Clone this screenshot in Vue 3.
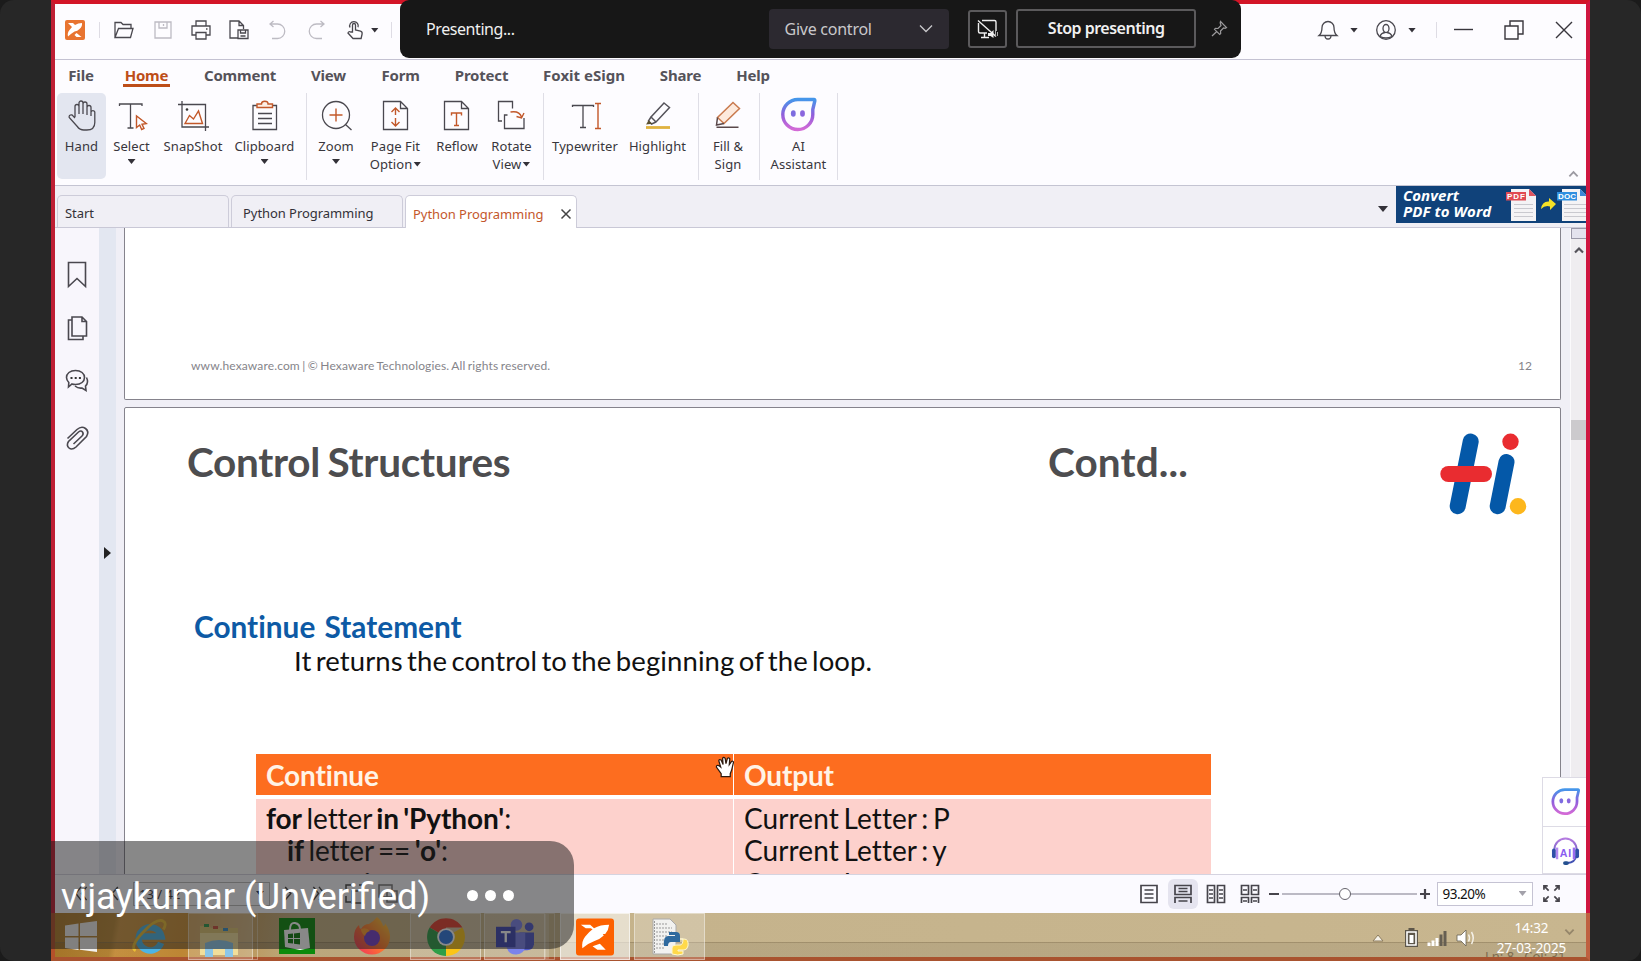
<script setup>
const K = 'fill="none" stroke="#4a484f" stroke-width="1.3"'
const G = 'fill="none" stroke="#bdbbc3" stroke-width="1.3"'
const O = 'fill="none" stroke="#c2582a" stroke-width="1.4"'

const quick = [
  `<path ${K} d="M1 17.500V2.500h6l2 2h8v4M1 17.500l3.500-9H19l-2.500 9z"/>`,
  `<path ${G} d="M2 2h16v16H2zM6 2v6h8V2M10.500 4v2"/>`,
  `<path ${K} d="M5 6V1h10v5M5 15H1V6h18v9h-4M5 12.500h10V19H5zM15 9h1.500"/>`,
  `<path ${K} d="M9 18H1V1h9l4.500 4.500V9M10 1v4.500h4.500M9 10h10v8.500H9zM11.500 10v3h5v-3M11.500 16h5"/>`,
  `<path ${G} d="M5.500 1L2 4l3.500 3M2 4h7.500a7 7 0 0 1 0 14.500H4"/>`,
  `<path ${G} d="M14.500 1L18 4l-3.500 3M18 4h-7.500a7 7 0 0 0 0 14.500H16"/>`,
  `<path ${K} d="M7.500 12V5a1.500 1.500 0 0 1 3 0v5l5 1.200q2 .6 1.600 2.800l-1 4.500H8L3 13q.8-2 2.600-1zM5 7.500a4.300 4.300 0 1 1 8-.2"/>`,
]

const menu = [
  { t: 'File', k: 'm-file' }, { t: 'Home', k: 'm-home' }, { t: 'Comment', k: 'm-comment' },
  { t: 'View', k: 'm-view' }, { t: 'Form', k: 'm-form' }, { t: 'Protect', k: 'm-protect' },
  { t: 'Foxit eSign', k: 'm-esign' }, { t: 'Share', k: 'm-share' }, { t: 'Help', k: 'm-help' },
]

const page = `<path ${K} d="M3.500 2.500h17l7 7v21h-24zM20.500 2.500v7h7"/>`
const ghost = (id) => `<defs><linearGradient id="${id}" x1="0" y1="0" x2="0" y2="1"><stop offset="0" stop-color="#4596ea"/><stop offset=".5" stop-color="#8f5fdc"/><stop offset="1" stop-color="#d36ad6"/></linearGradient></defs>
<path fill="none" stroke="url(#${id})" stroke-width="3.400" stroke-linejoin="round" d="M17.500 2.500H33.500q1 0 .8 1.500L32.300 12.500V17.500A15 15 0 1 1 17.500 2.500z"/><ellipse cx="12.800" cy="16.500" rx="2.400" ry="3.300" fill="#7d6ce0"/><ellipse cx="22" cy="16.500" rx="2.400" ry="3.300" fill="#8a66de"/>`

const groups = [
  [
    { k: 'b-hand', l: ['Hand'], on: true, i: `<path ${K} d="M9 18V7.500a2 2 0 0 1 4 0V15V4a2 2 0 0 1 4 0v11V5a2 2 0 0 1 4 0v11V8.500a2 2 0 0 1 4 0V17M25 17v-4a2 2 0 0 1 3.800 0v10.500q0 7.500-8 7.500h-3q-4 0-6.500-3.500L3.200 18.500q-.6-3 3-2.500L9 19"/>` },
    { k: 'b-select', l: ['Select'], d: true, i: `<path ${K} d="M3.500 7V5H26v2M14.500 5v24M11.500 29h6"/><path ${O} d="M20.500 17v11.500l3.200-2.500 2 4.500 2.300-1-2-4.300 4.300-.7z"/>` },
    { k: 'b-snap', l: ['SnapShot'], i: `<path ${K} d="M1 5.500h27.500V32M5 2v26h27"/><circle cx="10" cy="10.500" r="1.300" fill="#333"/><path ${O} d="M8 24.500l4.500-8 4 3.500 5-8 4 12.500z"/>` },
    { k: 'b-clip', l: ['Clipboard'], d: true, i: `<path ${K} d="M4 6.500h23.500v24H4zM9 14.500h14M9 19.500h14M9 24.500h14"/><path fill="#fdeee4" stroke="#c2582a" stroke-width="1.400" d="M8 8.500V5h4.500q0-2.800 3.300-2.800T19 5h4.500v3.500z"/>` },
  ],
  [
    { k: 'b-zoom', l: ['Zoom'], d: true, i: `<circle cx="16" cy="16" r="13.500" ${K}/><path ${K} d="M25.500 25.500l6 5.500"/><path ${O} d="M9.500 16h13M16 9.500v13"/>` },
    { k: 'b-fit', l: ['Page Fit', 'Option'], d2: true, i: page + `<path ${O} d="M15.500 9v7M11.500 13l4-4 4 4M15.500 19v8M11.500 23l4 4 4-4"/>` },
    { k: 'b-reflow', l: ['Reflow'], i: page + `<path ${O} d="M10.500 16.500v-2.500h10v2.500M15.500 14v12.500M13 26.500h5"/>` },
    { k: 'b-rotate', l: ['Rotate', 'View'], d2: true, i: `<path ${K} d="M6 22H2.500V2.500h14v7M11.500 16H8.500v13.500h19.500V19"/><path ${O} d="M14.500 13q9-1.500 11 5M20.500 17.500l5 1.500 2.500-5"/>` },
  ],
  [
    { k: 'b-type', l: ['Typewriter'], i: `<path ${K} d="M3.500 8V6.500h21V8M14 6.500v22M11 28.500h6"/><path ${O} d="M26 4.500h6M29 4.500v25M26 29.500h6"/>` },
    { k: 'b-high', l: ['Highlight'], i: `<path fill="none" stroke="#55535a" stroke-width="1.500" d="M22 4l5.500 4.500L14 23l-5-5zM9 18l-2.500 4 3 3L14 23"/><path fill="#5a5030" d="M6.500 21.500l4 3.200-6.500.8z"/><path stroke="#dfb23f" stroke-width="2.800" d="M4 28.500h24"/>` },
  ],
  [
    { k: 'b-fill', l: ['Fill &', 'Sign'], i: `<path fill="#fdeadd" stroke="#c97a4e" stroke-width="1.500" d="M21 3.500l6.500 6L12 24.500l-6.500-6z"/><path fill="none" stroke="#5a484a" stroke-width="1.500" d="M5.500 18.500L4.500 26l7.500-1.500M4.500 28.200h22"/>` },
  ],
  [{ k: 'b-ai', l: ['AI', 'Assistant'], ai: true, i: ghost('gA') }],
]

const D = 'fill="none" stroke="#4a484f" stroke-width="1.600"'
const side = [
  `<path ${D} d="M3.500 1.500h17v24L12 17.500l-8.500 8z"/>`,
  `<path ${D} d="M7 2h10l4.500 4.500V21H7zM17 2v4.500h4.500M7 5H3.500v19.500H18V21"/>`,
  `<path ${D} d="M10.500 1.500c5.500 0 9 3 9 7s-3.500 7-9 7q-2 0-3.500-.5L3.500 18l.3-4.500Q1.500 11 1.500 8.500c0-4 3.500-7 9-7zM21.500 8.500q2.500 5-1 8.500l.5 4.500-4-2.500q-4 .5-7-2"/><path stroke="#333" stroke-width="2" stroke-dasharray="2 2.200" d="M5.500 9h11"/>`,
  `<path ${D} d="M2.500 15.500L12 6.500q4.500-4 8.500-1t1 8L11 24q-4 3.500-7 1t-.5-6.500L13.500 9q2.500-2 4 0t-.5 4L8.500 21"/>`,
]

const S = 'fill="none" stroke="#46444b" stroke-width="1.700"'
const views = [
  `<path ${S} d="M2 1.500h16v17H2zM5.500 6h9M5.500 10h9M5.500 14h9"/>`,
  `<path ${S} d="M2 1.500h16v9H2zM5.500 4.500h9M5.500 7.500h9M2 19v-5.500h16V19M5.500 17h9"/>`,
  `<path ${S} d="M1.500 1.500h7v17h-7zM11.500 1.500h7v17h-7zM3 6h4M3 10h4M3 14h4M13 6h4M13 10h4M13 14h4"/>`,
  `<path ${S} d="M1.500 1.500h7v9h-7zM11.500 1.500h7v9h-7zM3 6h4M13 6h4M1.500 19v-5.500h7V19M11.500 19v-5.500h7V19M3 17h4M13 17h4"/>`,
]

const code = [
  { k: 'r1', p: [['for', 1], [' letter ', 0], ["in 'Python'", 1], [':', 0]] },
  { k: 'r2', p: [['if', 1], [' letter == ', 0], ["'o'", 1], [':', 0]] },
  { k: 'r3', p: [['continue', 1]] },
]
const output = ['P', 'y', 't']
</script>

<template>
  <div class="desk">
    <div class="screen">
      <div class="window">
        <header class="titlebar">
          <svg class="brand" viewBox="0 0 20 20"><rect width="20" height="20" rx="2" fill="#e87430" /><path fill="#fff" d="M3 3h5l2 2Q13 3 17 3q.5 3.500-2.500 6-2 2-5 2.500Q7 13 3 16.500 2 13 4.500 10L7 7zM11.500 13l5 4h-5l-2-2z" /></svg>
          <i class="vline first"></i>
          <span v-for="(q, n) in quick" :key="n" class="qcell"><svg viewBox="0 0 20 20" v-html="q"></svg></span>
          <i class="caret"></i>
          <i class="vline mid"></i>
          <div class="winctl">
            <svg class="i20" viewBox="0 0 20 20"><path fill="none" stroke="#4a484f" stroke-width="1.300" d="M1 15.500Q4 13 4 7.500a6 6 0 0 1 12 0q0 5.500 3 8zM7 15.500a3 3.500 0 0 0 6 0" /></svg>
            <i class="caret"></i>
            <svg class="i20 user" viewBox="0 0 20 20"><g fill="none" stroke="#4a484f" stroke-width="1.300"><circle cx="10" cy="10" r="9.300" /><ellipse cx="10" cy="8.500" rx="3" ry="4" /><path d="M4 16.500q1-3.500 5-4M16 16.500q-1-3.500-5-4M4 16.500q6 3 12 0" /></g></svg>
            <i class="caret"></i>
            <i class="vline third"></i>
            <svg class="i20 min" viewBox="0 0 20 20"><path stroke="#38363c" stroke-width="1.400" d="M0 9.500h19" /></svg>
            <svg class="i20 max" viewBox="0 0 20 20"><path fill="none" stroke="#38363c" stroke-width="1.400" d="M1 6h13v13H1zM6 6V1h13v13h-5" /></svg>
            <svg class="i20 cls" viewBox="0 0 20 20"><path stroke="#38363c" stroke-width="1.400" d="M2 2l16 16M18 2L2 18" /></svg>
          </div>
        </header>

        <nav class="menu">
          <span v-for="m in menu" :key="m.t" :class="['mi', m.k]"><b>{{ m.t }}</b></span>
        </nav>

        <section class="ribbon">
          <div v-for="(g, n) in groups" :key="n" class="group">
            <div v-for="b in g" :key="b.k" :class="['rb', b.k, { on: b.on }]">
              <svg :viewBox="b.ai ? '0 0 36 36' : '0 0 32 33'" :class="{ big: b.ai }" v-html="b.i"></svg>
              <span v-for="(t, j) in b.l" :key="t">{{ t }}<i v-if="b.d2 && j === 1" class="caret in"></i></span>
              <i v-if="b.d" class="caret"></i>
            </div>
          </div>
          <svg class="fold" viewBox="0 0 12 8"><path fill="none" stroke="#9c9aa2" stroke-width="2" d="M1.500 6.500L6 2l4.500 4.500" /></svg>
        </section>

        <section class="tabs">
          <div class="tab"><span>Start</span></div>
          <div class="tab doc"><span>Python Programming</span></div>
          <div class="tab active"><span>Python Programming</span><svg viewBox="0 0 12 12"><path stroke="#444" stroke-width="1.500" d="M1.500 1.500l9 9M10.500 1.500l-9 9" /></svg></div>
          <i class="caret wide"></i>
          <div class="banner">
            <p>Convert<br />PDF to Word</p>
            <svg viewBox="0 0 80 37">
              <path fill="#f4f3f5" d="M5 3h18l7 7v25H5z" /><path fill="#dd5560" d="M23 3l7 7h-7z" />
              <path stroke="#c9c9cf" d="M8 18.500h19M8 22.500h19M8 26.500h19M8 30.500h19" /><rect y="6" width="20" height="8.500" fill="#e04a52" />
              <path fill="#f6e227" d="M35 23q1-8 8-7.500V12l7 6-6 6v-3.500Q39 19 35 23z" />
              <path fill="#f4f3f5" d="M56 3h18l7 7v25H56z" /><path fill="#3a86d8" d="M74 3l7 7h-7z" />
              <path stroke="#c9c9cf" d="M58 18.500h22M58 22.500h22M58 26.500h22M58 30.500h22" /><rect x="51" y="6" width="20" height="8.500" fill="#2f8fe0" />
              <text class="tag" x="1" y="13.200" textLength="18">PDF</text><text class="tag" x="52" y="13.200" textLength="18">DOC</text>
            </svg>
          </div>
        </section>

        <main class="content">
          <aside class="rail"><svg v-for="(s, n) in side" :key="n" viewBox="0 0 24 27" v-html="s"></svg></aside>
          <div class="strip"><i></i></div>
          <div class="viewer">
            <article class="page top">
              <p class="foot">www.hexaware.com | © Hexaware Technologies. All rights reserved.</p>
              <p class="num">12</p>
            </article>
            <article class="page">
              <div class="headrow">
                <h1>Control Structures</h1>
                <h1 class="contd">Contd...</h1>
                <svg class="hi" viewBox="1436 430 92 88"><g stroke-linecap="round" stroke-width="16"><path stroke="#0458a8" d="M1470.700 441.500L1457.700 506.200M1506.500 462L1497.700 506.200" /><path stroke="#e92c30" d="M1448.300 474h35.700" /></g><circle cx="1510.500" cy="441.700" r="8.200" fill="#e92c30" /><circle cx="1518" cy="506.300" r="8.200" fill="#fdb71c" /></svg>
              </div>
              <h2>Continue&nbsp; Statement</h2>
              <p class="lead">It returns the control to the beginning of the loop.</p>
              <div class="table">
                <div class="th"><span>Continue</span></div>
                <div class="th"><span class="outp">Output</span></div>
                <div class="td"><p v-for="c in code" :key="c.k" :class="c.k"><template v-for="(x, n) in c.p" :key="n"><b v-if="x[1]">{{ x[0] }}</b><template v-else>{{ x[0] }}</template></template></p></div>
                <div class="td out"><p v-for="o in output" :key="o">Current Letter : {{ o }}</p></div>
              </div>
            </article>
          </div>
          <div class="scroll">
            <i class="split"></i>
            <svg viewBox="0 0 12 8"><path fill="none" stroke="#55535a" stroke-width="2.200" d="M2 6.500L6 2.500l4 4" /></svg>
            <i class="thumb"></i>
          </div>
          <div class="float">
            <div><svg viewBox="0 0 36 36" v-html="ghost('gB')"></svg></div>
            <div><svg viewBox="0 0 30 31"><defs><linearGradient id="gC" x1="0" y1="0" x2="0" y2="1"><stop offset="0" stop-color="#b57be0" /><stop offset="1" stop-color="#3b4fb0" /></linearGradient></defs><path fill="none" stroke="url(#gC)" stroke-width="2" d="M3.500 14a11.500 11.500 0 0 1 23 0M26 21q-1 6-9 7" /><rect x="1" y="13" width="4" height="10" rx="2" fill="#2f4fa8" /><rect x="5" y="12" width="2.500" height="12" fill="#b388f0" /><rect x="25" y="13" width="4" height="10" rx="2" fill="#2f4fa8" /><rect x="22.500" y="12" width="2.500" height="12" fill="#9a6cf0" /><rect x="12.500" y="26" width="6" height="4" rx="2" fill="#24508f" /><text class="ait" x="9" y="22">AI</text></svg></div>
          </div>
        </main>

        <footer class="status">
          <div class="pager">
            <svg class="a1" viewBox="0 0 14 16"><path fill="none" stroke="#444" stroke-width="1.500" d="M7 1L1.500 8 7 15M13 1L7.500 8l5.500 7" /></svg>
            <svg class="a2" viewBox="0 0 14 16"><path fill="none" stroke="#444" stroke-width="1.500" d="M10 1L4 8l6 7" /></svg>
            <div class="pgbox"><span>13 / 42</span><i class="caret"></i></div>
            <svg class="a3" viewBox="0 0 14 16"><path fill="none" stroke="#444" stroke-width="1.500" d="M4 1l6 7-6 7" /></svg>
            <svg class="a4" viewBox="0 0 14 16"><path fill="none" stroke="#444" stroke-width="1.500" d="M1 1l5.500 7L1 15M7 1l5.500 7L7 15" /></svg>
            <svg class="a5" viewBox="0 0 20 20"><path fill="none" stroke="#444" stroke-width="1.500" d="M1 6V1h5M14 1h5v5M1 12v6h5M7 7h12v12H7z" /></svg>
            <svg class="a6" viewBox="0 0 20 20"><path fill="none" stroke="#777" stroke-width="1.500" d="M1 1h13v12H1zM9 7h10v11H9z" /></svg>
          </div>
          <span v-for="(v, n) in views" :key="n" :class="['vw', { on: n === 1 }]"><svg viewBox="0 0 20 20" v-html="v"></svg></span>
          <i class="minus"></i>
          <div class="slider"><i></i></div>
          <svg class="plus" viewBox="0 0 10 10"><path stroke="#46444b" stroke-width="2.200" d="M0 5h10M5 0v10" /></svg>
          <div class="zoombox"><span>93.20%</span><i class="caret"></i></div>
          <svg class="full" viewBox="0 0 18 18"><path fill="none" stroke="#46444b" stroke-width="1.800" d="M1 5V1h4M1 1l5 5M13 1h4v4M17 1l-5 5M1 13v4h4M1 17l5-5M13 17h4v-4M17 17l-5-5" /></svg>
        </footer>
      </div>

      <div class="taskbar">
        <div class="tk start"><svg viewBox="0 0 32 31"><path fill="#f1efec" d="M0 4.500L13.500 2.500V15H0zM15 2.300L32 0v15H15zM0 16.500h13.500V29L0 27zM15 16.500h17V31l-17-2.300z" /></svg></div>
        <div class="tk ie"><svg viewBox="0 0 40 38"><path fill="none" stroke="#4db4e4" stroke-width="7" d="M32.500 26.500A12.500 12.500 0 1 1 33 19.500H12" /><path fill="none" stroke="#e9bd35" stroke-width="3" d="M5 35Q-2 31 13 15T35 3q4 2 0 9" /></svg></div>
        <div class="tk box exp"><svg viewBox="0 0 38 36"><path fill="#dcc272" d="M0 4h9l2 2h27v26H0z" /><path fill="#f1de9b" d="M0 11h38v22H0z" /><path fill="#2f9a4c" d="M4 2h5v3H4z" /><path fill="#c8513e" d="M13 4h5v3h-5z" /><path fill="#3b8cc4" d="M23 6h5v3h-5z" /><path fill="#8cc6e8" d="M5 21q14-6 28 0v14h-8v-8H13v8H5z" /></svg></div>
        <i class="stack"></i>
        <div class="tk store"><svg viewBox="0 0 36 36"><rect width="36" height="36" fill="#0c8a0c" /><path fill="#fff" d="M5 12l24-2 2 20-10 2-15-3z" /><path fill="none" stroke="#fff" stroke-width="2" d="M11 12q0-8 5-7t5 6" /><path fill="#0c7a0c" d="M9 16l5-.5V20H9zM15 15.400l6-.6V20h-6zM9 21h5v4.500L9 25zM15 21h6v5.500l-6-.7z" /></svg></div>
        <div class="tk ff"><svg viewBox="0 0 36 38"><defs><linearGradient id="gF" x1="1" y1="0" x2="0" y2="1"><stop offset="0" stop-color="#ffd23a" /><stop offset=".5" stop-color="#ff7a2c" /><stop offset="1" stop-color="#ee2b62" /></linearGradient></defs><path fill="url(#gF)" d="M23 0q5 4 6 9 3-1 2-3 5 7 5 14a18 17.500 0 0 1-36 0Q0 12 5 8q0 3 2 4 3-5 8-5 5-3 8-7z" /><circle cx="18" cy="21" r="8" fill="#7540c8" /><path fill="#ff9f2f" d="M7 12q6-2 9 2-4 1-5 5-4-3-4-7z" /></svg></div>
        <div class="tk box chr"><svg viewBox="0 0 38 38"><path fill="#e4402f" d="M19 19L2.700 9.500a19 19 0 0 1 32.700 0H19z" /><path fill="#fbc517" d="M19 19L35.400 9.500A19 19 0 0 1 19 38z" /><path fill="#2f9e48" d="M19 19V38A19 19 0 0 1 2.600 9.500z" /><circle cx="19" cy="19" r="8.800" fill="#fff" /><circle cx="19" cy="19" r="7" fill="#2f77df" /></svg></div>
        <div class="tk box tms"><svg viewBox="0 0 39 37"><circle cx="21" cy="6" r="6" fill="#7b83eb" /><circle cx="34" cy="8" r="4.500" fill="#5059c9" /><path fill="#5059c9" d="M24 14h15v12q-1 6-7 6h-8z" /><path fill="#7b83eb" d="M11 14h19v14q-1 8-9 8.500T11 29z" /><rect y="8" width="20" height="21" fill="#4048b4" /><path stroke="#fff" stroke-width="2.400" d="M5 13.500h10M10 13.500V24" /></svg></div>
        <i class="stack two"></i>
        <div class="tk box fox"><svg viewBox="0 0 39 38"><rect width="39" height="38" rx="3" fill="#fd6100" /><path fill="#fff" d="M5 6.500h9.500l4 3.500Q25 6.500 34 6.500 33.500 12 30 16h-2.500l1 1.500q-4 4-9.500 5.500-6 2-12.500 7.500-1-7 3-12 4-5 7.500-7.500l-2-1H10zM24.500 26l6 6h-8.500l-5-3.500z" /></svg></div>
        <div class="tk box py"><svg viewBox="0 0 38 38"><path fill="#f2f2f0" stroke="#aaa" d="M2 1h17l6 6v29H2z" /><path stroke="#999" stroke-dasharray="2 1" d="M5 6h12M5 10h16M5 14h16M5 18h12M5 22h10M5 26h9M5 30h9M3.500 3v32" /><path fill="#2f6a9e" d="M18 14h7q4 0 4 4v6h-9q-3 0-3 4h-4q-1-10 4-10h7v-1h-6z" /><path fill="#ffd94a" stroke="#fff8d0" d="M29 21h4q5 0 4 7-1 4-4 4h-6v1h5v3q-5 2-11 0v-6q0-3 4-3h4q3 0 3-6z" /></svg></div>
        <div class="tray">
          <svg class="t1" viewBox="0 0 12 8"><path fill="#f5f2ea" stroke="#8d7d5f" d="M6 1l5 6H1z" /></svg>
          <svg class="t2" viewBox="0 0 13 19"><path fill="#5d564a" d="M3.500 0h6v2H13v17H0V2h3.500z" /><path fill="none" stroke="#fff" stroke-width="1.600" d="M2 4h9v13H2z" /><path fill="#fff" d="M4.500 7h4v8h-4z" /></svg>
          <svg class="t3" viewBox="0 0 20 16"><path stroke="#fff" stroke-width="3" d="M2 16v-3.500M6 16v-5.500M10 16V8" /><path stroke="#665f52" stroke-width="3" d="M14 16V4.500M18 16V1" /></svg>
          <svg class="t4" viewBox="0 0 20 18"><path fill="#fff" stroke="#665f52" stroke-width=".8" d="M1 6h4l5-5v16l-5-5H1z" /><path fill="none" stroke="#f4f0e6" stroke-width="1.500" d="M12.500 5.500q2 3.500 0 7M15.500 3q3.500 6 0 12" /></svg>
          <div class="clock"><span>14:32</span><span>27-03-2025</span><em>Ln: 8 &nbsp; Col: 31</em></div>
          <svg class="t5" viewBox="0 0 12 8"><path fill="none" stroke="#95866a" stroke-width="2" d="M1.500 1.500L6 6l4.500-4.500" /></svg>
        </div>
      </div>

      <div class="present">
        <span class="p-label">Presenting...</span>
        <div class="give"><span>Give control</span><svg viewBox="0 0 14 9"><path fill="none" stroke="#c9c8cb" stroke-width="1.300" d="M1 1.500l6 6 6-6" /></svg></div>
        <div class="mon"><svg viewBox="0 0 22 20"><path fill="none" stroke="#f0f0f0" stroke-width="1.400" d="M1 1.500l18 16M5 1.500h12.500q1.500 0 1.500 1.500v9M1.500 4v8.500q0 1.500 1.500 1.500h7M7.500 14v4M4 18.500h8" /><path fill="#f0f0f0" d="M11 14h2.500l3-3v8l-3-2H11z" /><path stroke="#aaa" d="M18.500 11.500v6M20.500 13v4" /></svg></div>
        <div class="stop">Stop presenting</div>
        <svg class="pin" viewBox="0 0 17 17"><path fill="none" stroke="#9b9a9c" stroke-width="1.200" d="M9.500 1.500l6 6-1.500.8-1.500-.3-3 3 .2 2.500-1 1L3.500 9.300l1-1 2.500.2 3-3L9.200 3zM5.800 11.500L1 16" /></svg>
      </div>

      <svg class="cursor" viewBox="0 0 20 23"><path fill="#fff" stroke="#2c1a10" stroke-width="1.300" d="M6 21.500v-3L1 11.500q0-2.500 2.500-1.500l2 1.500L3.500 5q.5-2 2.500-.8L8 9 7.500 2.500q1-2 2.700 0L11 8l1.500-5.500q1.500-1.500 2.500.5L14.500 9 17 5.500q2-.5 1.800 1.500L17 14.500l-1.500 4v3z" /></svg>

      <div class="who"><span>vijaykumar (Unverified)</span><i></i><i></i><i></i></div>
    </div>
  </div>
</template>

<style>
html, body { background: #1b1b1b; overflow: hidden; }
</style>

<style scoped>
* { box-sizing: border-box; margin: 0; padding: 0; }
svg { display: block; flex: none; overflow: visible; }
i { display: block; flex: none; font-style: normal; }
.desk { width: 1641px; height: 961px; background: #272727; border-radius: 14px; padding: 0 51px; overflow: hidden; font-family: "Noto Sans", "Open Sans", sans-serif; color: #38363c; }
.screen { position: relative; width: 1539px; height: 961px; overflow: hidden; }
.window { height: 913px; border: solid #cf1b34; border-color: #d31527 #cf1640 transparent #be1f34; border-width: 4px 4px 0; background: #fdfcff; display: flex; flex-direction: column; overflow: hidden; }
.caret { width: 8px; height: 5px; background: #333138; clip-path: polygon(0 0, 100% 0, 50% 100%); }
.vline { width: 1px; height: 16px; background: #dedce4; }

.titlebar { height: 56px; flex: none; border-bottom: 1px solid #c4c2d2; display: flex; align-items: center; padding: 0 0 3px 10px; }
.brand { width: 20px; height: 20px; }
.first { margin: 0 5px 0 14px; }
.qcell { width: 38.400px; display: flex; justify-content: center; }
.qcell svg { width: 20px; height: 20px; }
.mid { margin-left: 12px; }
.titlebar > .caret { margin-left: -3px; }
.winctl { margin-left: auto; display: flex; align-items: center; padding-right: 12px; }
.i20 { width: 20px; height: 20px; }
.winctl .caret { margin-left: 12px; }
.user { margin-left: 18px; }
.third { margin-left: 20px; }
.min { margin-left: 17px; }
.max { margin-left: 30px; }
.cls { margin-left: 30px; }

.menu { height: 33px; flex: none; display: flex; align-items: flex-start; font-size: 15px; color: #55535a; }
.mi { display: flex; justify-content: center; white-space: nowrap; }
.mi b { font-weight: 700; line-height: 20px; margin-top: 5px; letter-spacing: -.2px; height: 22px; }
.m-file { width: 52px; } .m-home { width: 79px; } .m-comment { width: 108px; } .m-view { width: 69px; } .m-form { width: 75px; }
.m-protect { width: 87px; } .m-esign { width: 118px; } .m-share { width: 75px; } .m-help { width: 70px; }
.m-esign b { letter-spacing: 0; }
.m-home b { color: #bd4e18; border-bottom: 3px solid #bd4e18; height: 22px; padding: 0 2px; }

.ribbon { height: 93px; flex: none; border-bottom: 1px solid #c4c4d2; display: flex; padding-left: 2px; position: relative; font-size: 13px; letter-spacing: .08px; }
.group { height: 87px; display: flex; padding-right: 6px; border-right: 1px solid #dfdee6; margin-right: 3px; }
.group:nth-child(2) { padding-right: 5px; }
.group:nth-child(3) { padding: 0 4px 0 2px; }
.group:nth-child(4) { padding-left: 1px; }
.group:nth-child(5) { padding: 0 5px 0 2px; }
.rb { display: flex; flex-direction: column; align-items: center; border-radius: 5px; padding-top: 6px; height: 86px; }
.rb.on { background: #e3e6f0; }
.rb svg { width: 32px; height: 33px; margin-bottom: 5px; }
.rb svg.big { width: 37px; height: 36px; margin: -2px 0 4px; }
.rb span { line-height: 18px; white-space: nowrap; display: flex; align-items: center; }
.rb > .caret { margin-top: 4px; }
.caret.in { margin-left: 1px; width: 8px; }
.b-hand { width: 49px; } .b-select { width: 51px; } .b-snap { width: 72px; } .b-clip { width: 71px; }
.b-zoom { width: 52px; } .b-fit { width: 67px; } .b-reflow { width: 56px; } .b-rotate { width: 53px; }
.b-type { width: 72px; } .b-high { width: 73px; } .b-fill { width: 50px; } .b-ai { width: 67px; }
.fold { width: 11px; height: 8px; margin: 77px 7px 0 auto; }

.tabs { height: 42px; flex: none; background: #f0eff5; border-bottom: 1px solid #c9c8d6; display: flex; align-items: flex-end; padding-left: 2px; font-size: 13px; color: #333138; }
.tab { width: 172px; height: 32px; border: 1px solid #cdccd9; border-bottom: 0; border-radius: 5px 5px 0 0; padding: 3px 0 0 7px; display: flex; align-items: center; margin-right: 2px; white-space: nowrap; }
.tab.doc { padding-left: 11px; }
.tab span { letter-spacing: -.06px; }
.tab.active { background: #fff; color: #c4572c; height: 33px; margin-bottom: -1px; padding: 3px 0 0 7px; margin-left: 0; }
.tab svg { width: 12px; height: 12px; margin-left: 17px; }
.caret.wide { width: 10px; height: 6px; margin: 0 8px 15px auto; }
.banner { width: 190px; height: 37px; background: #10427a; display: flex; align-self: flex-start; padding-left: 7px; overflow: hidden; }
.banner p { width: 104px; padding-top: 2px; font: italic 700 15px/15.500px "Open Sans", sans-serif; color: #fff; letter-spacing: .08px; white-space: nowrap; }
.banner svg { width: 80px; height: 37px; }
.tag { font: 700 8px "Liberation Sans", sans-serif; fill: #fff; }

.content { height: 647px; flex: none; display: flex; background: #f0eff6; position: relative; overflow: hidden; border-bottom: 1px solid #d5d3e0; }
.rail { width: 44px; background: #f8f6fc; padding: 33px 0 0 9.500px; display: flex; flex-direction: column; gap: 27px; }
.rail svg { width: 24px; height: 27px; }
.strip { width: 17px; background: #e3e7f1; padding: 319px 0 0 5px; }
.strip i { width: 7px; height: 12px; background: #222; clip-path: polygon(0 0, 100% 50%, 0 100%); }
.viewer { width: 1454px; padding-left: 8px; }
.page { width: 1437px; height: 560px; background: #fff; border: 1px solid #85838c; border-radius: 2px; color: #111; font-family: Lato, sans-serif; font-variant-ligatures: none; }
.page.top { height: 172px; border-top: 0; border-radius: 0 0 2px 2px; margin-bottom: 7px; padding: 130px 28px 0 66px; display: flex; justify-content: space-between; font-size: 12px; line-height: 16px; color: #85848a; }
.foot { letter-spacing: .14px; word-spacing: -.8px; }
.headrow { display: flex; padding: 21px 0 0 62px; height: 122px; color: #4d4d4f; }
h1 { font-size: 40.500px; line-height: 65px; letter-spacing: -.3px; word-spacing: -2px; width: 861px; white-space: nowrap; }
h1.contd { width: 388px; letter-spacing: .1px; }
.hi { width: 92px; height: 88px; margin-top: 1px; }
h2 { padding: 79px 0 0 69px; font-size: 29.800px; line-height: 36px; color: #0d5aa5; word-spacing: -2.600px; white-space: nowrap; }
.lead { padding-left: 169px; font-size: 27.500px; line-height: 31px; letter-spacing: .1px; word-spacing: -2.800px; white-space: nowrap; }
.table { display: grid; grid-template-columns: 477px 477px; column-gap: 1px; row-gap: 4px; margin: 78px 0 0 131px; font-size: 28px; }
.th { background: #fd6d1f; height: 41px; color: #fff3e6; font-weight: 700; line-height: 42px; padding-left: 10px; letter-spacing: -.15px; }
.td { background: #fdd1cc; height: 110px; padding: 3px 0 0 10px; line-height: 32.300px; white-space: pre; word-spacing: -2.600px; letter-spacing: .1px; }
.r1 { letter-spacing: -.07px; }
.r2 { padding-left: 21px; letter-spacing: -.1px; }
.r3 { padding-left: 42px; }
.scroll { width: 16px; background: #efedf0; border-left: 1px solid #fbfafc; }
.split { height: 11px; border: 1px solid #9a98a8; background: #e4e3ee; border-right: 0; }
.scroll svg { width: 12px; height: 8px; margin: 7px 0 0 2px; }
.thumb { height: 20px; margin-top: 166px; background: #cccacd; }
.float { position: absolute; right: 0; bottom: 0; width: 44px; height: 97px; background: #fff; border: 1px solid #dddbe5; border-right: 0; }
.float div { height: 49px; border-bottom: 1px solid #dddbe5; display: flex; align-items: center; justify-content: center; padding-left: 2px; }
.float svg { width: 29px; height: 30px; }
.ait { font: 700 11px "Liberation Sans", sans-serif; fill: #8a5cf0; letter-spacing: 1px; }

.status { height: 38px; flex: none; background: #fbfaff; display: flex; align-items: center; padding: 0 0 1px 19px; }
.pager { width: 1060px; display: flex; align-items: center; }
.pager svg { height: 15px; width: 14px; }
.a2 { margin-left: 20px; }
.pgbox { width: 137px; height: 24px; border: 1px solid #bbb; margin-left: 11px; padding: 0 5px; display: flex; align-items: center; justify-content: space-between; font-size: 13px; }
.pager .a3 { margin-left: 11px; } .pager .a4 { margin-left: 17px; }
.pager .a5 { margin-left: 19px; width: 20px; height: 20px; } .pager .a6 { margin-left: 13px; width: 20px; height: 20px; }
.vw { width: 30px; height: 30px; border-radius: 6px; margin-right: 3.500px; display: flex; align-items: center; justify-content: center; }
.vw.on { background: #e5e4ef; }
.vw svg { width: 20px; height: 20px; }
.minus { width: 10px; height: 2px; background: #46444b; margin-left: 1px; }
.slider { width: 135px; height: 2px; background: #bbb9c4; margin: 0 3px; display: flex; align-items: center; }
.slider i { width: 12px; height: 12px; border: 1.500px solid #66646c; border-radius: 50%; background: #fff; margin-left: 57px; }
.plus { width: 10px; height: 10px; }
.zoombox { width: 96px; height: 24px; border: 1px solid #c5c3d3; background: #fff; margin-left: 6.500px; padding: 0 5px 0 5px; display: flex; align-items: center; justify-content: space-between; font-size: 13.500px; letter-spacing: -.5px; color: #111; }
.zoombox .caret { background: #a3a1aa; }
.full { width: 17px; height: 17px; margin-left: 10px; }

.taskbar { height: 48px; border: solid #a9532f; border-width: 0 4px 4px; border-color: #b5563f #bf6040 #a9532f #b5502a; display: flex; background: linear-gradient(#0000 29px, #7c6b4c80 29px, #7c6b4c80 30px, #00000012 30px), linear-gradient(100deg, #b07c2a 0, #bd8a38 60px, #d39a45 66px, #cb9038 132px, #c9b385 240px, #c5b38c 600px, #c8b68f 100%); }
.tk { height: 47px; display: flex; align-items: flex-start; padding-top: 5px; flex: none; }
.tk svg { height: 38px; width: 38px; }
.box { background: #ffffff38; border: 1px solid #ffffff66; justify-content: center; padding-top: 4px; }
.start { padding: 8px 0 0 10px; width: 76px; } .start svg { width: 32px; height: 31px; }
.ie { width: 57px; } .ie svg { width: 37px; height: 36px; }
.exp { width: 65px; padding: 8px 3px 0 0; }
.exp svg { height: 36px; }
.stack { width: 5px; border: 1px solid #ffffff55; border-left: 0; height: 47px; }
.store { padding: 5px 0 0 21px; width: 94px; } .store svg { width: 36px; height: 36px; }
.ff { padding: 4px 0 0 1px; width: 58px; }
.chr { width: 71px; }
.tms { width: 61px; margin-left: 3px; }
.stack.two { width: 10px; border-left: 1px solid #ffffff55; box-shadow: inset 3px 0 #ffffff30; }
.fox { width: 70px; margin-left: 5px; background: #ffffff90; border-color: #fff9; }
.py { width: 71px; margin-left: 4px; }
.tray { margin-left: auto; display: flex; color: #fff; }
.t1 { width: 12px; height: 8px; margin-top: 21px; }
.t2 { width: 13px; height: 19px; margin: 15px 0 0 21px; }
.t3 { width: 20px; height: 16px; margin: 17px 0 0 9px; }
.t4 { width: 20px; height: 18px; margin: 16px 0 0 9px; }
.clock { width: 88px; margin-left: 9px; height: 44px; overflow: hidden; font-size: 13.500px; line-height: 20px; position: relative; display: flex; flex-direction: column; align-items: center; padding: 5px 0 0 5px; letter-spacing: -.1px; }
.clock em { position: absolute; left: 0; top: 35px; width: 88px; text-align: left; font-style: normal; font-size: 13px; line-height: 16px; color: #7d6c50; letter-spacing: 0; white-space: nowrap; }
.clock span { z-index: 1; }
.t5 { width: 11px; height: 8px; margin: 15px 11px 0 -9px; }

.present { position: absolute; left: 349px; top: 0; width: 841px; height: 58px; border-radius: 9px; background: #171717; display: flex; align-items: center; padding: 0 13px 1px 26px; color: #f0f0f0; font-size: 16px; }
.p-label { width: 343px; letter-spacing: -.42px; }
.give { width: 181px; height: 40px; border-radius: 4px; background: #2c2930; color: #c9c8cb; display: flex; align-items: center; justify-content: space-between; padding: 0 16px; letter-spacing: -.25px; }
.give svg { width: 14px; height: 9px; }
.mon { width: 39px; height: 38px; border: 2px solid #5b5a5c; border-radius: 3px; margin-left: 19px; display: flex; align-items: center; justify-content: center; }
.mon svg { width: 22px; height: 20px; }
.stop { width: 180px; height: 39px; border: 2px solid #5b5a5c; border-radius: 3px; margin-left: 9px; font-weight: 600; line-height: 34px; text-align: center; letter-spacing: -.5px; }
.pin { width: 17px; height: 17px; margin-left: 15px; }
.cursor { position: absolute; left: 664px; top: 756px; width: 20px; height: 22px; }
.who { position: absolute; left: 0; top: 841px; width: 523px; height: 108px; border-radius: 0 24px 24px 0; background: #1a1a1a85; display: flex; align-items: center; padding-left: 10px; color: #fff; font: 36.300px "Roboto", sans-serif; white-space: nowrap; }
.who span { width: 406px; padding-top: 3px; }
.who i { width: 11px; height: 11px; border-radius: 50%; background: #fff; margin-right: 7px; }
</style>
